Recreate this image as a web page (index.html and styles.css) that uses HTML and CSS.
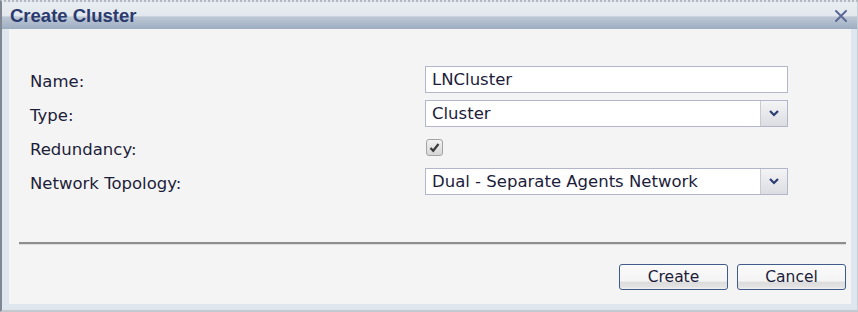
FILE: index.html
```html
<!DOCTYPE html>
<html lang="en">
<head>
  <meta charset="UTF-8">
  <title>Create Cluster</title>
  <link rel="stylesheet" href="styles.css">
</head>
<body>

  <div class="dialog">
    <div class="dialog-title">
      <span>Create Cluster</span>
      <svg class="close-icon" width="12" height="12" viewBox="0 0 12 12">
        <path d="M1 1 L11 11 M11 1 L1 11" stroke="#5d6a96" stroke-width="2" stroke-linecap="round" />
      </svg>
    </div>

    <div class="dialog-body">
      <form class="cluster-form">
        <label for="name">Name:</label>
        <input type="text" id="name" class="field" value="LNCluster">

        <label>Type:</label>
        <div class="field select">
          <span>Cluster</span>
          <span class="select-btn">
            <svg width="10" height="7" viewBox="0 0 10 7"><path d="M1 1 L5 5 L9 1" fill="none" stroke="#2c3d72" stroke-width="2.2" /></svg>
          </span>
        </div>

        <label>Redundancy:</label>
        <div class="check-cell">
          <span class="checkbox">
            <svg width="13" height="13" viewBox="0 0 13 13"><path d="M2.5 7 L5.2 9.8 L10.5 3" fill="none" stroke="#3c3c3c" stroke-width="2.2" /></svg>
          </span>
        </div>

        <label>Network Topology:</label>
        <div class="field select">
          <span>Dual - Separate Agents Network</span>
          <span class="select-btn">
            <svg width="10" height="7" viewBox="0 0 10 7"><path d="M1 1 L5 5 L9 1" fill="none" stroke="#2c3d72" stroke-width="2.2" /></svg>
          </span>
        </div>
      </form>

      <div class="separator"></div>

      <div class="btn-row">
        <button type="button" class="btn">Create</button>
        <button type="button" class="btn">Cancel</button>
      </div>
    </div>
  </div>

</body>
</html>
```

FILE: styles.css
```css
body {
  margin: 0;
  font-family: "DejaVu Sans", sans-serif;
  font-size: 16.5px;
  color: #1c1d3a;
}

.dialog {
  width: 858px;
  height: 312px;
  box-sizing: border-box;
  border-top: 2px dotted #b4b8be;
  border-left: 2px solid #7f8792;
  border-right: 1px solid #c9d0d8;
  border-bottom: 2px solid #c4c9cf;
  background: #dfe6ee;
  display: flex;
  flex-direction: column;
}

.dialog-title {
  height: 27px;
  flex-shrink: 0;
  display: flex;
  align-items: center;
  justify-content: space-between;
  padding: 0 10px 0 8px;
  background: linear-gradient(#e8edf1 0%, #e2e8ed 50%, #bcc7d4 56%, #9dadc1 100%);
  font-family: "Liberation Sans", Arial, sans-serif;
  font-weight: bold;
  font-size: 18.5px;
  color: #2b3a6e;
}

.close-icon {
  margin-top: 1px;
}

.dialog-body {
  flex: 1;
  margin: 0 6px 6px 7px;
  background: #f4f4f4;
  padding: 37px 5px 14px 10px;
  display: flex;
  flex-direction: column;
}

.cluster-form {
  display: grid;
  grid-template-columns: 395px 363px;
  grid-auto-rows: 27px;
  row-gap: 7px;
  padding-left: 11px;
  align-items: center;
}

.cluster-form label {
  padding-top: 3px;
}

.field {
  box-sizing: border-box;
  height: 27px;
  width: 363px;
  border: 1px solid #b3b6c9;
  background: #fff;
  font-family: inherit;
  font-size: 16.5px;
  color: #1c1d3a;
  padding: 0 6px;
  margin: 0;
}

.select {
  display: flex;
  align-items: center;
  justify-content: space-between;
  padding-right: 0;
}

.select-btn {
  width: 26px;
  height: 100%;
  display: flex;
  align-items: center;
  justify-content: center;
  border-left: 1px solid #c9cbd4;
  background: linear-gradient(#f4f4f6, #dcdde2);
}

.check-cell {
  display: flex;
  align-items: center;
  padding-left: 1px;
}

.checkbox {
  width: 17px;
  height: 17px;
  box-sizing: border-box;
  border: 1px solid #a2a4a8;
  border-radius: 3px;
  background: linear-gradient(#f2f2f2, #d6d6d6);
  display: flex;
  align-items: center;
  justify-content: center;
}

.separator {
  margin-top: auto;
  height: 2px;
  background: #8d8d8d;
  border-bottom: 1px solid #dcdcdc;
}

.btn-row {
  display: flex;
  justify-content: flex-end;
  gap: 9px;
  margin-top: 19px;
}

.btn {
  width: 109px;
  height: 26px;
  border: 1.5px solid #3f5b8c;
  border-radius: 3px;
  background: linear-gradient(#fafafa 0%, #f4f4f4 68%, #dcdcdc 70%, #e2e2e2 90%, #f2f2f2 100%);
  font-family: "DejaVu Sans", sans-serif;
  font-size: 15.5px;
  color: #1c1d3a;
  padding: 0;
}
```
